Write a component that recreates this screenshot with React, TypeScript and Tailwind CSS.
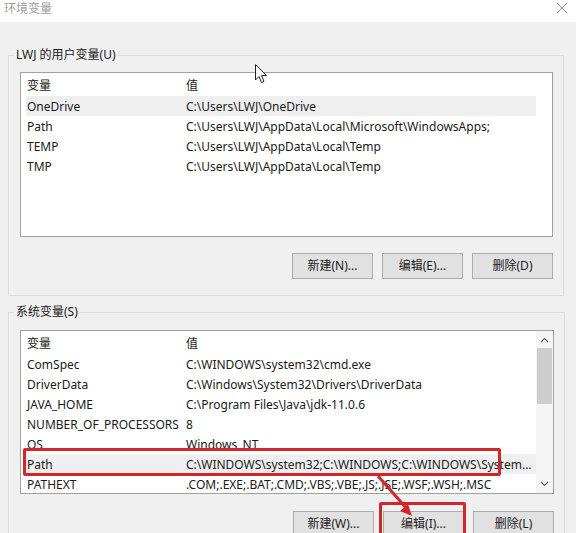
const userVars = [
  ["OneDrive", "C:\\Users\\LWJ\\OneDrive"],
  ["Path", "C:\\Users\\LWJ\\AppData\\Local\\Microsoft\\WindowsApps;"],
  ["TEMP", "C:\\Users\\LWJ\\AppData\\Local\\Temp"],
  ["TMP", "C:\\Users\\LWJ\\AppData\\Local\\Temp"],
];

const sysVars = [
  ["ComSpec", "C:\\WINDOWS\\system32\\cmd.exe"],
  ["DriverData", "C:\\Windows\\System32\\Drivers\\DriverData"],
  ["JAVA_HOME", "C:\\Program Files\\Java\\jdk-11.0.6"],
  ["NUMBER_OF_PROCESSORS", "8"],
  ["OS", "Windows_NT"],
  ["Path", "C:\\WINDOWS\\system32;C:\\WINDOWS;C:\\WINDOWS\\System..."],
  ["PATHEXT", ".COM;.EXE;.BAT;.CMD;.VBS;.VBE;.JS;.JSE;.WSF;.WSH;.MSC"],
];

function Row({ name, value, active }: { name: string; value: string; active?: boolean }) {
  return (
    <div className={`flex h-[20px] w-[510px] items-center whitespace-nowrap pt-[2px] ${active ? "bg-[#efefef]" : ""}`}>
      <div className="w-[160px] pl-[1px]">{name}</div>
      <div className="flex-1 overflow-hidden">{value}</div>
    </div>
  );
}

function Header() {
  return (
    <div className="flex h-[23px] w-[510px] items-center pt-[3px]">
      <div className="w-[160px] pl-[1px] border-r border-[#f3f3f3]">变量</div>
      <div className="flex-1">值</div>
    </div>
  );
}

function Btn({ label }: { label: string }) {
  return (
    <div className="flex h-[26px] w-[81px] items-center justify-center border border-[#adadad] bg-[#e1e1e1] text-[#222]">
      {label}
    </div>
  );
}

export default function App() {
  return (
    <div className="relative h-[533px] w-[576px] overflow-hidden bg-[#f0f0f0] font-['Noto_Sans','Noto_Sans_CJK_SC',sans-serif] text-[12px] text-[#1a1a1a]">
      {/* title bar */}
      <div className="flex h-[22px] items-start justify-between bg-white pl-[4px] pr-[9px] pt-[1px]">
        <span className="leading-[16px] text-[#a0a0a0]">环境变量</span>
        <svg width="10" height="10" viewBox="0 0 10 10" className="mt-[2px]">
          <path d="M0 0L10 10M10 0L0 10" stroke="#8a8a8a" strokeWidth="1" />
        </svg>
      </div>

      {/* user vars */}
      <fieldset className="ml-2 mr-3 mt-[25px] border border-[#dcdcdc] pb-[16px] pl-[11px] pr-[10px] pt-[9px]">
        <legend className="-ml-[6px] px-[2px] leading-[16px]">LWJ 的用户变量(U)</legend>
        <div className="h-[165px] border border-[#a0a0a0] bg-white pl-[5px]">
          <Header />
          {userVars.map(([n, v], i) => (
            <Row key={n} name={n} value={v} active={i === 0} />
          ))}
        </div>
        <div className="mt-[16px] flex justify-end gap-[9px]">
          <Btn label="新建(N)..." />
          <Btn label="编辑(E)..." />
          <Btn label="删除(D)" />
        </div>
      </fieldset>

      {/* system vars */}
      <fieldset className="ml-2 mr-3 mt-2 border border-[#dcdcdc] pb-[16px] pl-[11px] pr-[10px] pt-[10px]">
        <legend className="-ml-[6px] px-[2px] leading-[16px]">系统变量(S)</legend>
        <div className="flex h-[164px] border border-[#a0a0a0] bg-white">
          <div className="flex-1 overflow-hidden pl-[5px]">
            <Header />
            {sysVars.map(([n, v]) => (
              <Row key={n} name={n} value={v} active={n === "Path"} />
            ))}
          </div>
          <div className="flex w-[17px] flex-col items-center bg-[#f5f5f5]">
            <svg width="9" height="6" viewBox="0 0 9 6" className="mt-[6px]">
              <path d="M1 5L4.5 1.5L8 5" stroke="#606060" strokeWidth="1.2" fill="none" />
            </svg>
            <div className="mt-[5px] h-[56px] w-[15px] bg-[#cdcdcd]" />
            <div className="flex-1" />
            <svg width="9" height="6" viewBox="0 0 9 6" className="mb-[6px]">
              <path d="M1 1L4.5 4.5L8 1" stroke="#606060" strokeWidth="1.2" fill="none" />
            </svg>
          </div>
        </div>
        <div className="mt-[17px] flex justify-end gap-[9px]">
          <Btn label="新建(W)..." />
          <Btn label="编辑(I)..." />
          <Btn label="删除(L)" />
        </div>
      </fieldset>

      {/* mouse cursor */}
      <svg className="absolute left-[255px] top-[64px]" width="13" height="20" viewBox="0 0 13 20">
        <path d="M0.5 0.5L0.5 16L4 12.5L6.5 18.5L9 17.5L6.5 11.5L11.5 11.5Z" fill="white" stroke="#222" strokeWidth="1" />
      </svg>

      {/* annotations */}
      <div className="absolute left-[23px] top-[448px] h-[28px] w-[478px] rounded-[2px] border-[3px] border-[#d3262b]" />
      <div className="absolute left-[379px] top-[502px] h-[40px] w-[87px] rounded-[2px] border-[3px] border-[#d3262b]" />
      <svg className="absolute left-[370px] top-[472px]" width="50" height="48" viewBox="0 0 50 48">
        <path d="M8 4L38 38" stroke="#d3262b" strokeWidth="3" />
        <path d="M42 44L30 39L38 32Z" fill="#d3262b" />
      </svg>
    </div>
  );
}
